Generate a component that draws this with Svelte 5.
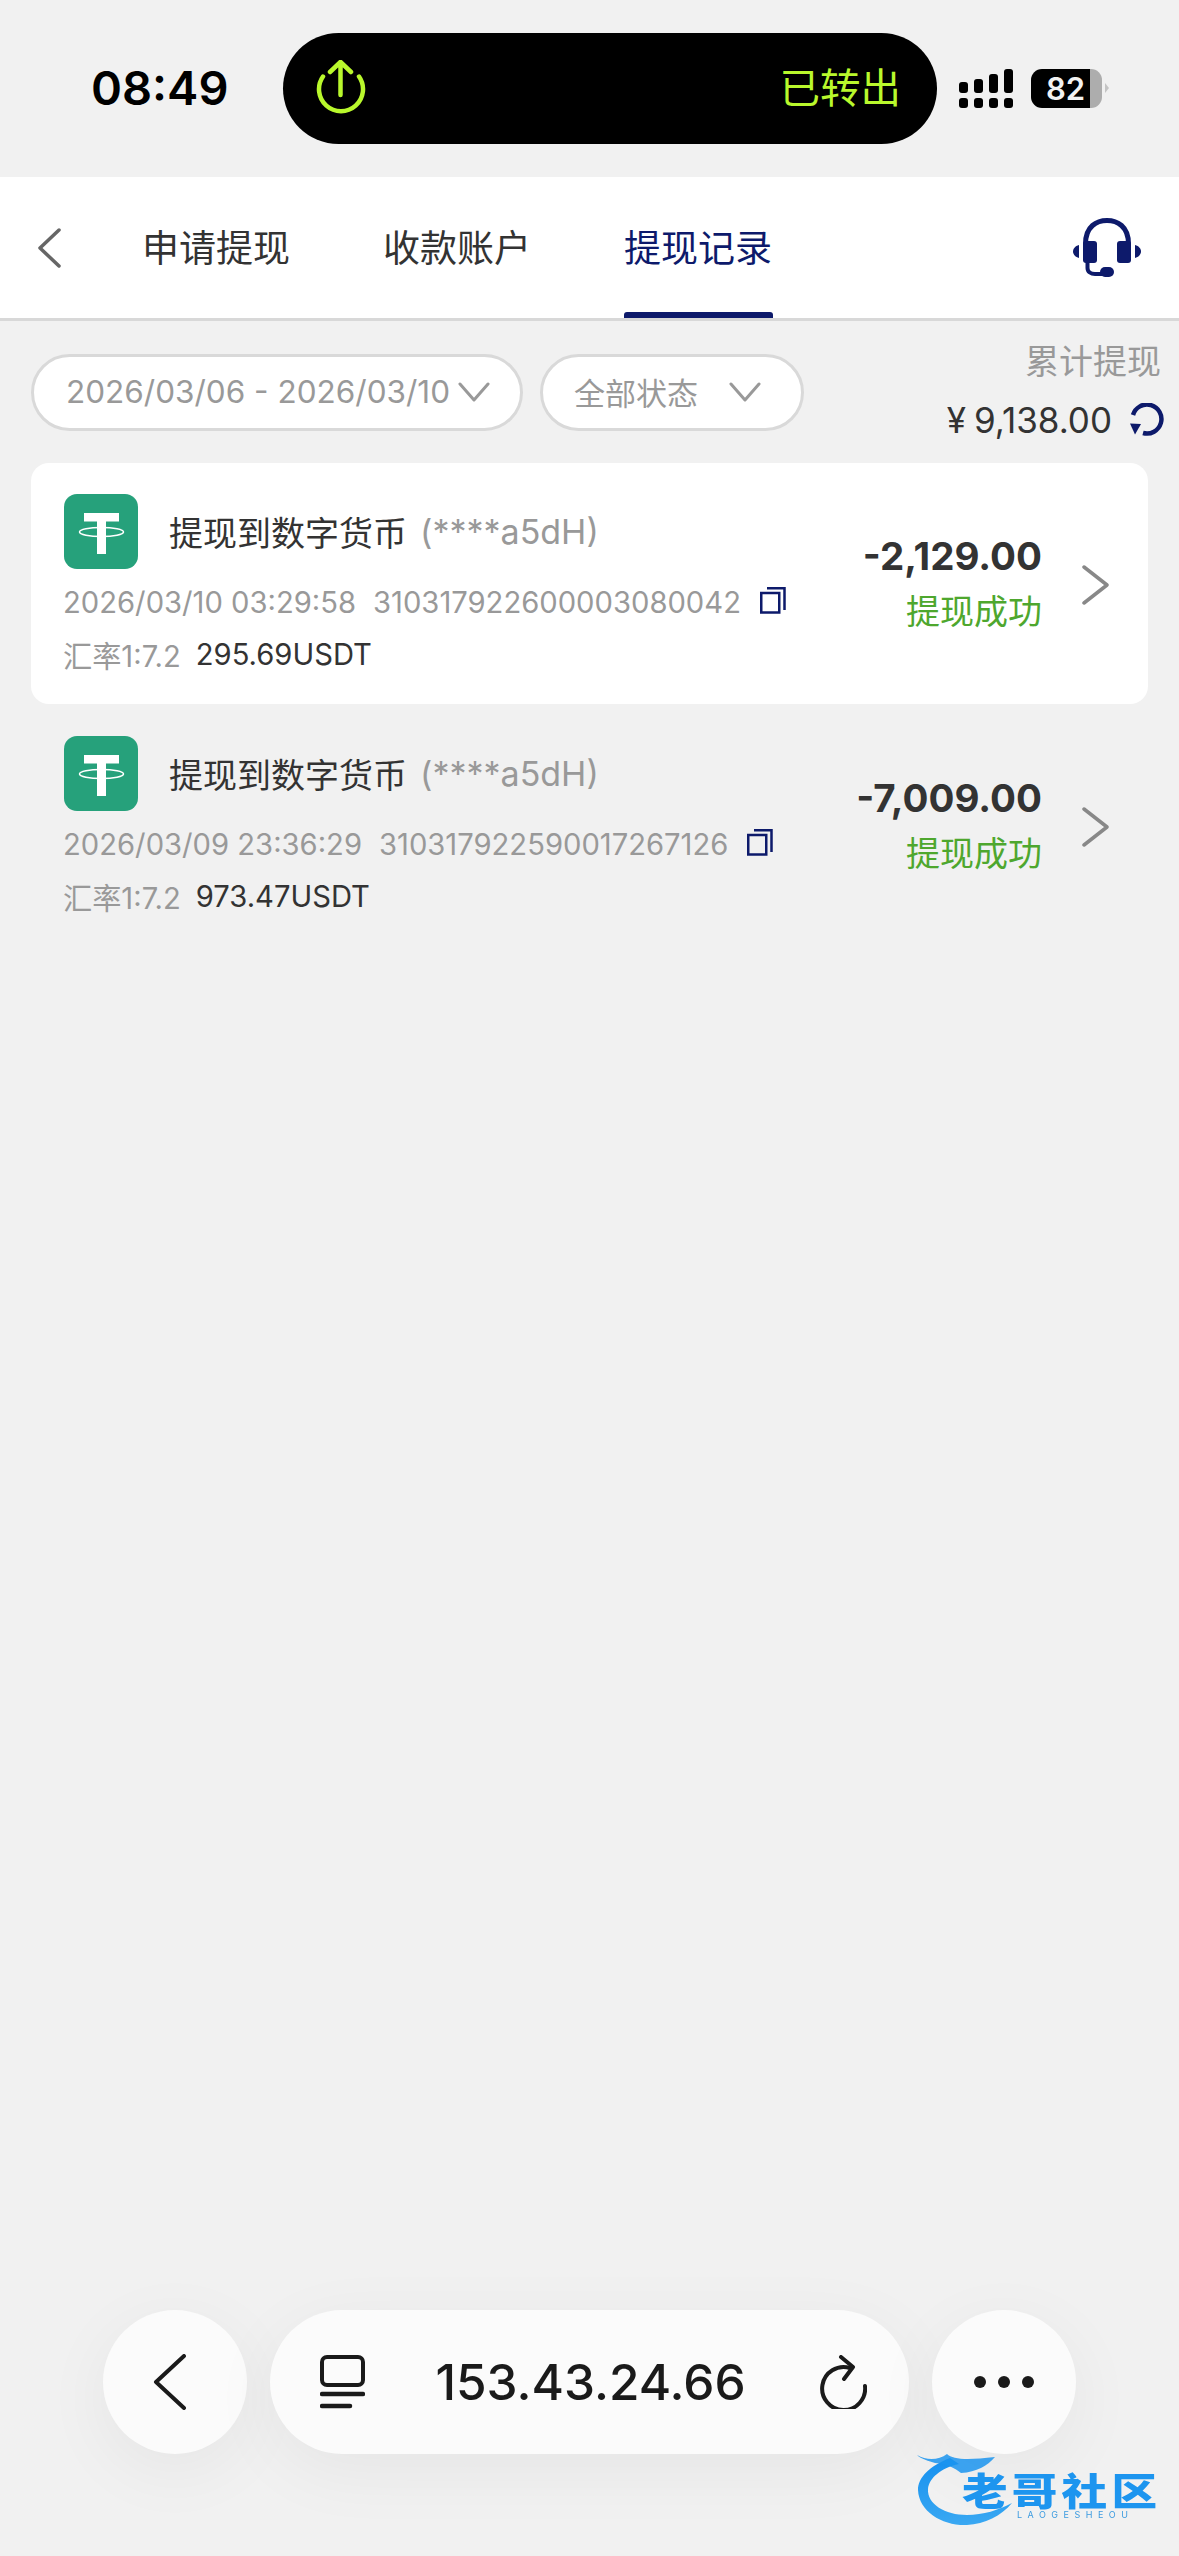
<script>
  const tabs = [
    { label: '申请提现', active: false },
    { label: '收款账户', active: false },
    { label: '提现记录', active: true }
  ];
  const records = [
    { time: '2026/03/10 03:29:58', id: '310317922600003080042', usdt: '295.69USDT', amount: '-2,129.00', card: true },
    { time: '2026/03/09 23:36:29', id: '310317922590017267126', usdt: '973.47USDT', amount: '-7,009.00', card: false }
  ];
</script>

<div class="page">
  <header class="status">
    <span class="time">08:49</span>
    <div class="island">
      <svg class="power" width="50" height="56" viewBox="0 0 50 56" fill="none" stroke="#b9f82c" stroke-width="4.5" stroke-linecap="round" stroke-linejoin="round">
        <path d="M7 16.500 A 22 22 0 1 0 43 16.500" />
        <path d="M24.500 2 V35 M14 12 L24.500 2 L35 12" />
      </svg>
      <span class="island-text">已转出</span>
    </div>
    <svg class="signal" width="54" height="39" viewBox="0 0 54 39" fill="#000">
      <rect x="0" y="13" width="9" height="11" rx="3" />
      <rect x="15" y="10" width="9" height="14" rx="3" />
      <rect x="30" y="5" width="9" height="19" rx="3" />
      <rect x="45" y="0" width="9" height="24" rx="3" />
      <rect x="0" y="29" width="9" height="10" rx="3" />
      <rect x="15" y="29" width="9" height="10" rx="3" />
      <rect x="30" y="29" width="9" height="10" rx="3" />
      <rect x="45" y="29" width="9" height="10" rx="3" />
    </svg>
    <div class="battery"><span>82</span></div>
    <span class="nub"></span>
  </header>

  <nav class="nav">
    <svg class="nav-back" width="24" height="40" viewBox="0 0 24 40" fill="none" stroke="#666" stroke-width="3.5" stroke-linecap="round" stroke-linejoin="round">
      <path d="M22 2 L3 20 L22 38" />
    </svg>
    <div class="tabs">
      {#each tabs as tab}
        <span class="tab" class:active={tab.active}>{tab.label}</span>
      {/each}
    </div>
    <svg class="headset" width="68" height="60" viewBox="0 0 68 60" fill="#0d1a6b">
      <path d="M12.500 26 C12.500 8 24 2.500 34 2.500 C44 2.500 55.500 8 55.500 26" fill="none" stroke="#0d1a6b" stroke-width="5" />
      <rect x="10" y="23" width="14" height="22" rx="3" />
      <rect x="44" y="23" width="14" height="22" rx="3" />
      <path d="M6 27 C2 28 0 31 0 33.500 C0 36 2 39 6 40 Z" />
      <path d="M62 27 C66 28 68 31 68 33.500 C68 36 66 39 62 40 Z" />
      <path d="M14.500 44 V50 C14.500 54 18 56 22 56 H32" fill="none" stroke="#0d1a6b" stroke-width="4" />
      <rect x="27" y="49" width="14" height="10" rx="5" />
    </svg>
  </nav>

  <section class="filters">
    <div class="pill date">
      <span>2026/03/06 - 2026/03/10</span>
      <svg width="32" height="20" viewBox="0 0 32 20" fill="none" stroke="#999" stroke-width="3" stroke-linecap="round" stroke-linejoin="round"><path d="M2 2 L16 18 L30 2" /></svg>
    </div>
    <div class="pill state">
      <span>全部状态</span>
      <svg width="32" height="20" viewBox="0 0 32 20" fill="none" stroke="#999" stroke-width="3" stroke-linecap="round" stroke-linejoin="round"><path d="M2 2 L16 18 L30 2" /></svg>
    </div>
    <div class="summary">
      <span class="summary-label">累计提现</span>
      <div class="summary-value">
        <span>¥</span><span class="summary-num">9,138.00</span>
        <svg width="34" height="33" viewBox="0 0 34 33" fill="none">
          <path d="M3 12 A 14.500 14.500 0 1 1 13 30" stroke="#0d1a6b" stroke-width="4.500" />
          <path d="M0 20.500 L11 21 L5 31.500 Z" fill="#0d1a6b" />
        </svg>
      </div>
    </div>
  </section>

  <main>
    {#each records as r}
      <article class="record" class:card={r.card}>
        <div class="info">
          <div class="title-row">
            <svg class="tether" width="74" height="75" viewBox="0 0 74 75">
              <rect width="74" height="75" rx="13" fill="#26a17b" />
              <rect x="20" y="19" width="35" height="8.500" fill="#fff" />
              <rect x="33" y="19" width="9" height="41" fill="#fff" />
              <ellipse cx="37.500" cy="38" rx="22" ry="4.500" fill="none" stroke="#fff" stroke-width="1.500" />
            </svg>
            <span class="title">提现到数字货币</span>
            <span class="account">(****a5dH)</span>
          </div>
          <div class="meta-row">
            <span>{r.time}</span>
            <span class="order">{r.id}</span>
            <svg class="copy" width="26" height="27" viewBox="0 0 26 27" fill="none" stroke="#0d1a6b" stroke-width="2.500">
              <rect x="1.250" y="6" width="18" height="19.500" />
              <path d="M7 1.250 H24.500 V23" />
            </svg>
          </div>
          <div class="rate-row">
            <span class="rate">汇率1:7.2</span>
            <span class="usdt">{r.usdt}</span>
          </div>
        </div>
        <div class="result">
          <span class="amount">{r.amount}</span>
          <span class="success">提现成功</span>
        </div>
        <svg class="go" width="29" height="40" viewBox="0 0 29 40" fill="none" stroke="#888" stroke-width="3.500" stroke-linecap="round" stroke-linejoin="round">
          <path d="M3 2 L26 20 L3 38" />
        </svg>
      </article>
    {/each}
  </main>

  <footer class="browser">
    <div class="round">
      <svg class="browser-back" width="34" height="56" viewBox="0 0 34 56" fill="none" stroke="#1a1a1a" stroke-width="4" stroke-linecap="round" stroke-linejoin="round">
        <path d="M31 2 L3 28 L31 54" />
      </svg>
    </div>
    <div class="address">
      <svg width="45" height="54" viewBox="0 0 45 54" fill="none" stroke="#1a1a1a" stroke-width="4" stroke-linecap="round">
        <rect x="2" y="2" width="41" height="28" rx="5" />
        <path d="M2 39 H43" stroke-width="4.500" />
        <path d="M2 51 H30" stroke-width="4.500" />
      </svg>
      <span class="url">153.43.24.66</span>
      <svg width="47" height="54" viewBox="0 0 47 54" fill="none" stroke="#1a1a1a" stroke-width="4" stroke-linecap="round" stroke-linejoin="round">
        <path d="M30 13 A 21.500 21.500 0 1 0 45 31" />
        <path d="M21 2 L33 12 L24 24" />
      </svg>
    </div>
    <div class="round">
      <svg width="60" height="14" viewBox="0 0 60 14" fill="#1a1a1a">
        <circle cx="6" cy="7" r="6" />
        <circle cx="30" cy="7" r="6" />
        <circle cx="54" cy="7" r="6" />
      </svg>
    </div>
  </footer>

  <div class="mark">
    <svg class="mark-dragon" width="112" height="76" viewBox="0 0 112 76" fill="none">
      <defs>
        <linearGradient id="dg" x1="0" y1="0" x2="0" y2="1">
          <stop offset="0" stop-color="#1590ef" />
          <stop offset="1" stop-color="#3aa8f2" />
        </linearGradient>
      </defs>
      <path d="M33 6 C12 14 1 26 1 38 C2 60 26 74 50 73 C68 72 84 64 95 51 C82 58 66 63 50 63 C28 63 10 52 11 37 C12 26 24 16 42 12 Z" fill="url(#dg)" />
      <path d="M0 3 C10 9 22 8 30 2 C36 8 52 8 78 5 C70 14 60 20 44 21 C38 16 30 12 18 11 C12 9 4 7 0 3 Z" fill="#1b94ef" opacity="0.85" />
    </svg>
    <span class="mark-text">老哥社区</span>
    <span class="mark-sub">LAOGESHEOU</span>
  </div>
</div>

<style>
  :global(body) {
    margin: 0;
    background: #f1f1f1;
  }
  .page {
    position: relative;
    width: 1179px;
    height: 2556px;
    overflow: hidden;
    display: flex;
    flex-direction: column;
    background: #f1f1f1;
    font-family: Inter, "Noto Sans CJK SC", sans-serif;
    color: #333;
  }
  .status {
    height: 177px;
    flex: none;
    display: flex;
    align-items: center;
  }
  .time {
    flex: none;
    width: 283px;
    padding-left: 91px;
    box-sizing: border-box;
    font-size: 47px;
    font-weight: 600;
    color: #000;
    margin-top: -3px;
    white-space: nowrap;
  }
  .island {
    flex: none;
    width: 654px;
    height: 111px;
    background: #000;
    border-radius: 56px;
    display: flex;
    align-items: center;
    justify-content: space-between;
    box-sizing: border-box;
    padding: 0 36px 0 33px;
  }
  .power {
    margin-top: -1px;
  }
  .island-text {
    font-size: 40.500px;
    line-height: 48px;
    color: #b9f82c;
  }
  .signal {
    flex: none;
    margin-left: 22px;
    margin-top: -1px;
  }
  .battery {
    flex: none;
    width: 71px;
    height: 39px;
    margin-left: 18px;
    margin-top: -1px;
    border-radius: 11px;
    background: linear-gradient(90deg, #000 59px, #adadad 59px);
    display: flex;
    align-items: center;
    box-sizing: border-box;
    padding-left: 15px;
  }
  .battery span {
    color: #f2f2f2;
    font-size: 31px;
    font-weight: 600;
    line-height: 39px;
  }
  .nub {
    flex: none;
    width: 0;
    height: 0;
    margin-left: 3px;
    margin-top: -1px;
    border-left: 4px solid #c4c4c4;
    border-top: 5px solid transparent;
    border-bottom: 5px solid transparent;
  }
  .nav {
    height: 141px;
    flex: none;
    background: #fff;
    border-bottom: 3px solid #d8d8d8;
    display: flex;
    align-items: center;
    padding-left: 37px;
    position: relative;
  }
  .tabs {
    height: 100%;
    display: flex;
    gap: 93px;
    margin-left: 81px;
  }
  .tab {
    position: relative;
    display: flex;
    align-items: center;
    font-size: 37px;
    color: #333;
    padding-bottom: 4px;
    box-sizing: border-box;
  }
  .tab.active {
    color: #0d1a6b;
  }
  .tab.active::after {
    content: "";
    position: absolute;
    left: 0;
    right: -1px;
    bottom: 0;
    height: 6px;
    background: #0d1a6b;
    border-radius: 3px 3px 0 0;
  }
  .headset {
    margin-left: auto;
    margin-right: 38px;
  }
  .filters {
    height: 142px;
    flex: none;
    display: flex;
    align-items: flex-start;
    padding-left: 31px;
    box-sizing: border-box;
  }
  .pill {
    height: 77px;
    margin-top: 33px;
    padding-bottom: 2px;
    box-sizing: border-box;
    border: 3px solid #d9d9d9;
    border-radius: 39px;
    background: #fff;
    display: flex;
    align-items: center;
    color: #999;
    white-space: nowrap;
  }
  .date {
    width: 492px;
    padding-left: 32px;
    gap: 8px;
    font-size: 31.500px;
  }
  .state {
    width: 264px;
    margin-left: 17px;
    padding-left: 31px;
    gap: 31px;
    font-size: 31px;
  }
  .summary {
    margin-left: auto;
    margin-top: 19px;
    padding-right: 15px;
    display: flex;
    flex-direction: column;
    align-items: flex-end;
    gap: 14px;
  }
  .summary-label {
    font-size: 34px;
    line-height: 44px;
    color: #999;
    margin-right: 3px;
  }
  .summary-value {
    display: flex;
    align-items: center;
    font-size: 35px;
    line-height: 44px;
    color: #333;
    margin-left: -3px;
  }
  .summary-num {
    margin-left: 8px;
  }
  .summary-value svg {
    margin-left: 18px;
    margin-top: -2px;
  }
  main {
    display: flex;
    flex-direction: column;
    margin: 0 31px;
  }
  .record {
    height: 241px;
    box-sizing: border-box;
    padding: 31px 38px 0 33px;
    display: flex;
    align-items: flex-start;
    border-radius: 18px;
  }
  .record.card {
    background: #fff;
    margin-bottom: 1px;
  }
  .info {
    flex: 1;
    min-width: 0;
  }
  .title-row {
    display: flex;
    align-items: center;
    height: 75px;
  }
  .title {
    margin-left: 31px;
    font-size: 34px;
    color: #333;
  }
  .account {
    margin-left: 13px;
    font-size: 34px;
    color: #999;
  }
  .meta-row {
    margin-top: 13px;
    margin-left: -1px;
    height: 40px;
    display: flex;
    align-items: center;
    font-size: 29.200px;
    color: #999;
    white-space: nowrap;
  }
  .order {
    margin-left: 17px;
  }
  .copy {
    margin-left: 19px;
    margin-top: -3px;
  }
  .rate-row {
    margin-top: 12px;
    margin-left: -1px;
    height: 40px;
    display: flex;
    align-items: center;
    font-size: 29.200px;
    white-space: nowrap;
  }
  .rate {
    color: #999;
  }
  .usdt {
    margin-left: 15px;
    color: #333;
  }
  .result {
    display: flex;
    flex-direction: column;
    align-items: flex-end;
    margin-top: 42px;
    gap: 12px;
  }
  .amount {
    font-size: 38.500px;
    line-height: 40px;
    font-weight: 700;
    color: #333;
  }
  .success {
    font-size: 34px;
    line-height: 48px;
    color: #4ea72e;
  }
  .go {
    margin-left: 39px;
    flex: none;
    margin-top: 71px;
  }
  .browser {
    margin-top: auto;
    margin-bottom: 102px;
    margin-left: 103px;
    display: flex;
    gap: 23px;
  }
  .round {
    width: 144px;
    height: 144px;
    border-radius: 50%;
    background: #fbfbfb;
    box-shadow: 0 16px 70px rgba(0, 0, 0, 0.05);
    display: flex;
    align-items: center;
    justify-content: center;
  }
  .browser-back {
    margin-right: 10px;
  }
  .address {
    width: 639px;
    height: 144px;
    box-sizing: border-box;
    border-radius: 72px;
    background: #fbfbfb;
    box-shadow: 0 16px 70px rgba(0, 0, 0, 0.05);
    display: flex;
    align-items: center;
    justify-content: space-between;
    padding: 0 42px 0 50px;
  }
  .url {
    font-size: 49.500px;
    font-weight: 500;
    color: #1a1a1a;
    margin-left: -4px;
  }
  .mark {
    position: absolute;
    left: 917px;
    top: 2452px;
    width: 245px;
    height: 74px;
    filter: blur(0.6px);
  }
  .mark-dragon {
    position: absolute;
    left: 0;
    top: 0;
  }
  .mark-text {
    position: absolute;
    left: 45px;
    top: 21px;
    font-size: 38px;
    line-height: 36px;
    font-weight: 900;
    letter-spacing: 3.500px;
    color: #1d95ef;
    white-space: nowrap;
    transform: scaleX(1.2);
    transform-origin: left center;
  }
  .mark-sub {
    position: absolute;
    left: 100px;
    top: 58px;
    font-size: 9px;
    line-height: 10px;
    letter-spacing: 5.500px;
    color: #3c9be0;
    white-space: nowrap;
  }
</style>
